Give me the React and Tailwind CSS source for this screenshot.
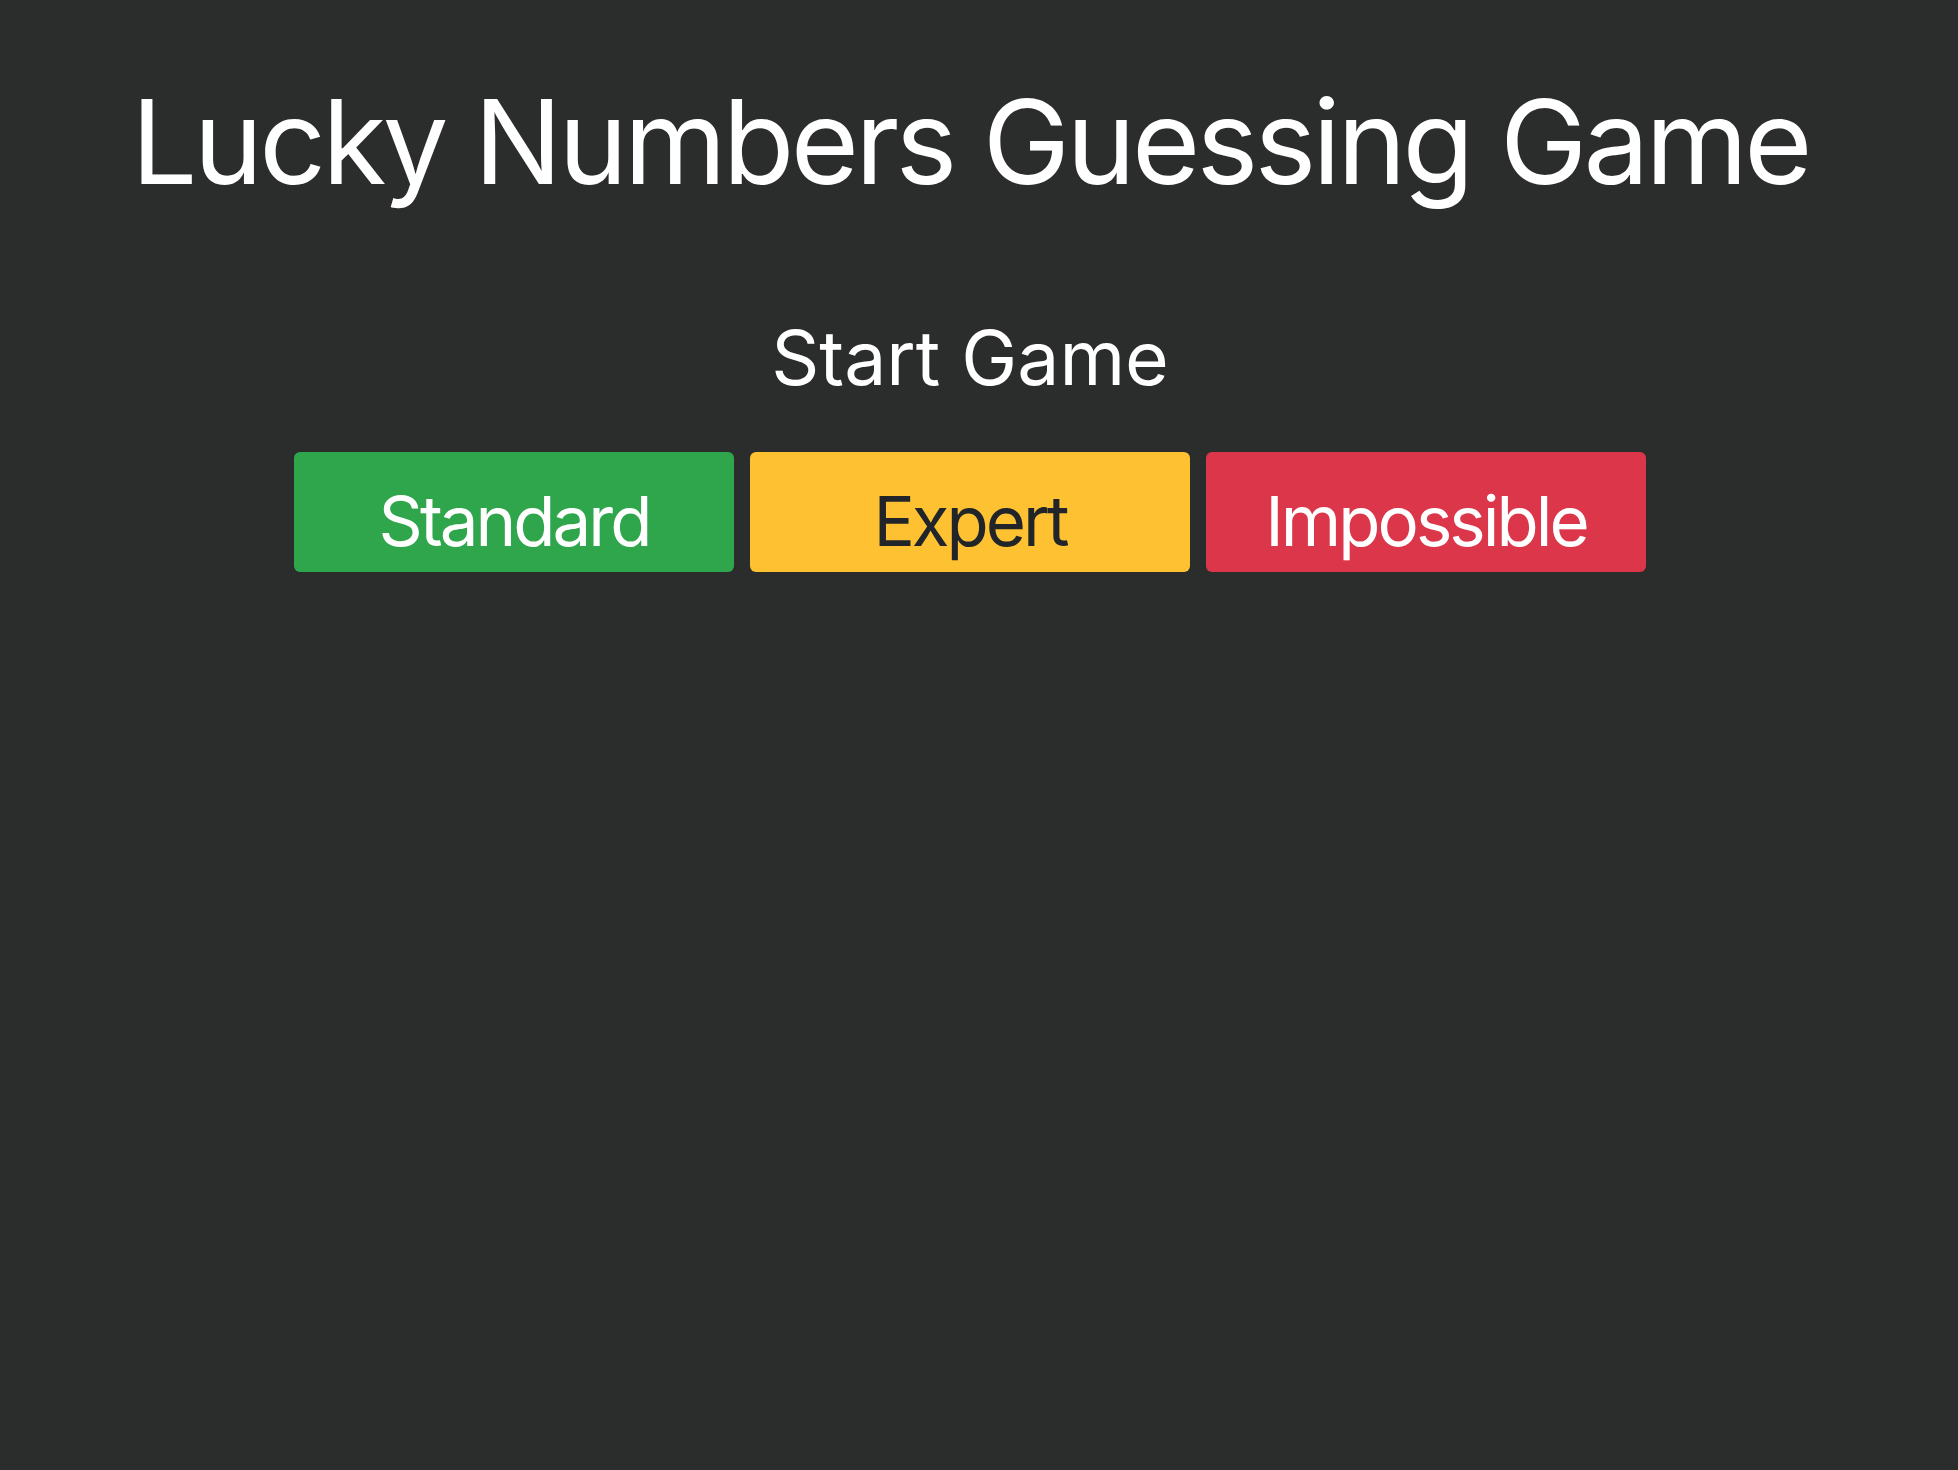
export default function App() {
  const modes = [
    { label: 'Standard', cls: 'bg-[#2fa64c] text-white' },
    { label: 'Expert', cls: 'bg-[#fdc131] text-[#212529]' },
    { label: 'Impossible', cls: 'bg-[#db3649] text-white' },
  ];

  return (
    <div className="min-h-screen w-full bg-[#2b2d2c] pr-[18px] font-['Inter','Noto_Sans',sans-serif]">
      <div className="flex flex-col items-center pt-[83px]">
        {/* Title */}
        <h1 className="text-[117px] leading-none tracking-[-3.7px] text-white font-normal">Lucky Numbers Guessing Game</h1>

        {/* Start section */}
        <h2 className="mt-[120px] text-[75px] leading-none text-white font-normal">Start Game</h2>

        <div className="mt-[57px] flex gap-4">
          {modes.map((m) => (
            <button
              key={m.label}
              className={`h-[120px] w-[440px] rounded-[6px] pt-[19px] text-[69px] leading-none tracking-[-3px] ${m.cls}`}
            >
              <span className="block text-center">{m.label}</span>
            </button>
          ))}
        </div>
      </div>
    </div>
  );
}
